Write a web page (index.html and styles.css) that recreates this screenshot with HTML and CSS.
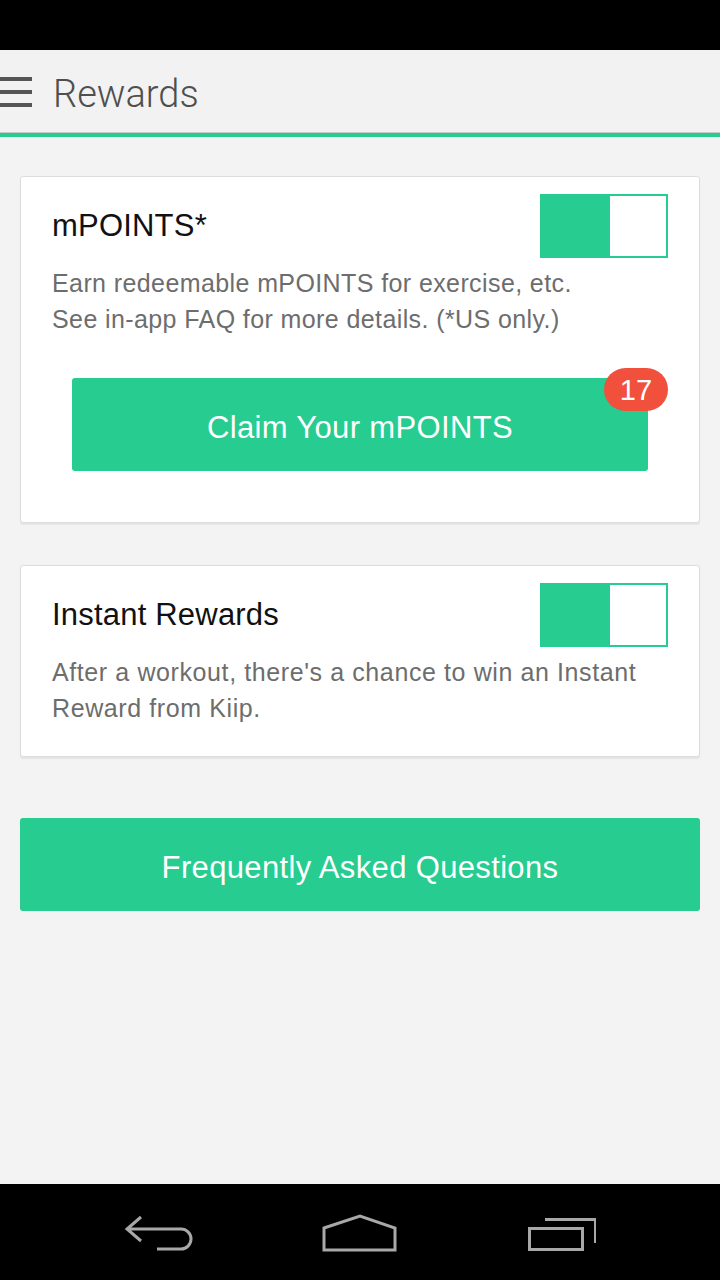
FILE: index.html
```html
<!DOCTYPE html>
<html>
<head>
<meta charset="utf-8">
<link rel="stylesheet" href="styles.css">
</head>
<body>
<div class="screen">
  <div class="statusbar"></div>
  <header class="appbar">
    <div class="hamburger"><span></span><span></span><span></span></div>
    <h1 class="title">Rewards</h1>
  </header>
  <div class="accent"></div>
  <main class="content">
    <section class="card card-points">
      <div class="card-head">
        <h2 class="card-title">mPOINTS*</h2>
        <div class="toggle"><span class="toggle-on"></span><span class="toggle-off"></span></div>
      </div>
      <p class="card-desc">Earn redeemable mPOINTS for exercise, etc.<br>See in-app FAQ for more details. (*US only.)</p>
      <div class="claim-wrap">
        <button class="btn btn-claim">Claim Your mPOINTS</button>
        <span class="badge">17</span>
      </div>
    </section>
    <section class="card card-instant">
      <div class="card-head">
        <h2 class="card-title">Instant Rewards</h2>
        <div class="toggle"><span class="toggle-on"></span><span class="toggle-off"></span></div>
      </div>
      <p class="card-desc card-desc-wide">After a workout, there's a chance to win an Instant Reward from Kiip.</p>
    </section>
    <button class="btn btn-faq">Frequently Asked Questions</button>
  </main>
  <nav class="navbar">
    <svg class="nav-icon" width="72" height="44" viewBox="0 0 72 44">
      <path d="M18 5 L4 17 L18 29 M4 17 H58 A10 10 0 0 1 58 37 H34" fill="none" stroke="#a8a8a8" stroke-width="3"/>
    </svg>
    <svg class="nav-icon" width="76" height="44" viewBox="0 0 76 44">
      <path d="M2 16 L38 4 L73 16 V38 H2 Z" fill="none" stroke="#a8a8a8" stroke-width="3"/>
    </svg>
    <svg class="nav-icon" width="72" height="44" viewBox="0 0 72 44">
      <rect x="5.5" y="16.5" width="53" height="21" fill="none" stroke="#a8a8a8" stroke-width="3"/>
      <path d="M21 7.5 H71.5 V31" fill="none" stroke="#a8a8a8" stroke-width="3"/>
    </svg>
  </nav>
</div>
</body>
</html>
```
FILE: styles.css
```css
* { box-sizing: border-box; }
html, body { margin: 0; padding: 0; }
body {
  width: 720px;
  height: 1280px;
  background: #f3f3f3;
  font-family: "Liberation Sans", Arial, sans-serif;
}
.screen {
  display: flex;
  flex-direction: column;
  height: 1280px;
}
.statusbar {
  height: 50px;
  background: #000;
}
.appbar {
  height: 83px;
  display: flex;
  align-items: center;
  background: #f2f2f2;
  border-bottom: 1px solid #c9c9c9;
}
.hamburger {
  width: 32px;
  display: flex;
  flex-direction: column;
  gap: 9px;
  margin-right: 21px;
  margin-top: 2px;
}
.hamburger span {
  display: block;
  height: 4px;
  background: #555;
}
.title {
  margin: 6px 0 0 0;
  font-family: Roboto, "Liberation Sans", sans-serif;
  font-weight: 300;
  font-size: 38px;
  color: #4f4f4f;
  letter-spacing: 0px;
}
.accent {
  height: 4px;
  background: #26cc90;
}
.content {
  flex: 1;
  display: flex;
  flex-direction: column;
  padding: 39px 20px 0 20px;
}
.card {
  background: #fff;
  border: 1px solid #dcdcdc;
  border-radius: 3px;
  box-shadow: 0 2px 1px rgba(0,0,0,0.06);
  padding: 17px 31px 0 31px;
}
.card-points {
  height: 347px;
}
.card-instant {
  margin-top: 42px;
  height: 192px;
}
.card-head {
  display: flex;
  align-items: center;
  justify-content: space-between;
  height: 64px;
}
.card-title {
  margin: 0;
  font-weight: normal;
  font-size: 31px;
  letter-spacing: 0.2px;
  color: #111;
}
.toggle {
  display: flex;
  width: 128px;
  height: 64px;
  border: 2px solid #26cc90;
}
.toggle-on {
  width: 68px;
  background: #26cc90;
}
.toggle-off {
  flex: 1;
  background: #fff;
}
.card-desc {
  margin: 7px 0 0 0;
  font-size: 25px;
  line-height: 36px;
  letter-spacing: 0.4px;
  color: #6d6d6d;
}
.card-desc-wide {
  letter-spacing: 0.6px;
}
.claim-wrap {
  position: relative;
  width: 576px;
  margin: 41px 0 0 20px;
}
.btn {
  display: block;
  border: none;
  border-radius: 3px;
  background: #26cc90;
  color: #fff;
  font-family: "Liberation Sans", Arial, sans-serif;
  font-size: 31px;
  letter-spacing: 0.35px;
  height: 93px;
  padding: 6px 0 0 0;
}
.btn-claim {
  width: 576px;
}
.badge {
  position: absolute;
  top: -10px;
  right: -20px;
  width: 64px;
  height: 43px;
  border-radius: 22px;
  background: #f0503c;
  color: #fff;
  font-size: 29px;
  line-height: 44px;
  text-align: center;
}
.btn-faq {
  width: 680px;
  margin-top: 61px;
}
.navbar {
  height: 96px;
  background: #000;
  display: flex;
  align-items: center;
  justify-content: space-between;
  padding: 0 124px 0 123px;
}
.nav-icon {
  display: block;
  margin-top: 4px;
}
```
